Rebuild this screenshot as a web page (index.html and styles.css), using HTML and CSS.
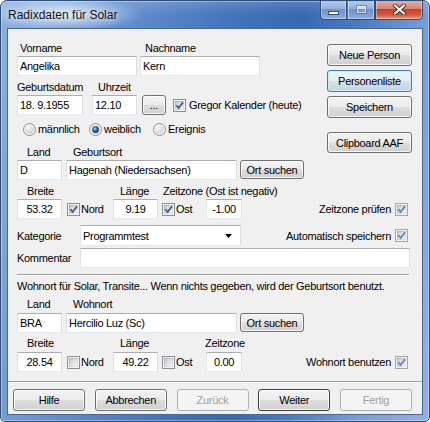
FILE: index.html
```html
<!DOCTYPE html>
<html lang="de">
<head>
<meta charset="utf-8">
<title>Radixdaten für Solar</title>
<link rel="stylesheet" href="styles.css">
</head>
<body>
<svg class="defs" width="0" height="0" aria-hidden="true">
  <defs>
    <linearGradient id="cbFill" x1="0" y1="0" x2="1" y2="1">
      <stop offset="0" stop-color="#c6cbd2"/>
      <stop offset="1" stop-color="#f6f6f6"/>
    </linearGradient>
    <linearGradient id="cbEdge" x1="0" y1="0" x2="1" y2="1">
      <stop offset="0" stop-color="#a9aeb5"/>
      <stop offset="1" stop-color="#e4e4e4"/>
    </linearGradient>
    <radialGradient id="rdFill" cx="0.35" cy="0.3" r="0.85">
      <stop offset="0" stop-color="#fafafa"/>
      <stop offset="1" stop-color="#c3c7cd"/>
    </radialGradient>
    <radialGradient id="rdDot" cx="0.42" cy="0.38" r="0.62">
      <stop offset="0" stop-color="#b9ecff"/>
      <stop offset="0.35" stop-color="#3c8fcf"/>
      <stop offset="1" stop-color="#0b2c52"/>
    </radialGradient>
  </defs>
  <symbol id="cb-on" viewBox="0 0 13 13">
    <rect x="0.5" y="0.5" width="12" height="12" fill="#f4f4f4" stroke="#8e8f8f"/>
    <rect x="2.5" y="2.5" width="8" height="8" fill="url(#cbFill)" stroke="url(#cbEdge)"/>
    <path d="M3.4 6.3 5.6 9.1 10 3.3" fill="none" stroke="#4b5f8e" stroke-width="1.8" stroke-linejoin="round"/>
  </symbol>
  <symbol id="cb-on-light" viewBox="0 0 13 13">
    <rect x="0.5" y="0.5" width="12" height="12" fill="#f4f4f4" stroke="#a3a4a6"/>
    <rect x="2.5" y="2.5" width="8" height="8" fill="url(#cbFill)" stroke="url(#cbEdge)"/>
    <path d="M3.4 6.3 5.6 9.1 10 3.3" fill="none" stroke="#6e86bd" stroke-width="1.8" stroke-linejoin="round"/>
  </symbol>
  <symbol id="cb-off" viewBox="0 0 13 13">
    <rect x="0.5" y="0.5" width="12" height="12" fill="#f4f4f4" stroke="#8e8f8f"/>
    <rect x="2.5" y="2.5" width="8" height="8" fill="url(#cbFill)" stroke="url(#cbEdge)"/>
  </symbol>
  <symbol id="rd-off" viewBox="0 0 13 13">
    <circle cx="6.5" cy="6.5" r="6" fill="#f4f4f4" stroke="#8e8f8f"/>
    <circle cx="6.5" cy="6.5" r="4.2" fill="url(#rdFill)"/>
  </symbol>
  <symbol id="rd-on" viewBox="0 0 13 13">
    <circle cx="6.5" cy="6.5" r="6" fill="#f4f4f4" stroke="#8e8f8f"/>
    <circle cx="6.5" cy="6.5" r="4.2" fill="url(#rdFill)"/>
    <circle cx="6.5" cy="6.5" r="3.4" fill="url(#rdDot)"/>
  </symbol>
</svg>

<div class="window">
  <div class="titlebar">
    <span class="title">Radixdaten für Solar</span>
    <div class="caption">
      <div class="cbtn cmin"><span class="g-min"></span></div>
      <div class="cbtn cmax"><span class="g-max"></span></div>
      <div class="cbtn cclose">
        <svg width="13" height="11" viewBox="0 0 13 11">
          <path d="M2 1.5 11 9.5 M11 1.5 2 9.5" stroke="#4a2a26" stroke-width="4" stroke-linecap="round"/>
          <path d="M2 1.5 11 9.5 M11 1.5 2 9.5" stroke="#ffffff" stroke-width="2.2" stroke-linecap="round"/>
        </svg>
      </div>
    </div>
  </div>

  <div class="client">
    <div class="top">
      <div class="left">
        <div class="lbls pl3">
          <span class="w125">Vorname</span><span>Nachname</span>
        </div>
        <div class="ctrls">
          <input class="tb w120" value="Angelika"><input class="tb w120 ml3" value="Kern">
        </div>

        <div class="lbls mt5">
          <span class="w81">Geburtsdatum</span><span>Uhrzeit</span>
        </div>
        <div class="ctrls">
          <input class="tb w66" value="18. 9.1955">
          <input class="tb w45 ml9" value="12.10">
          <div class="btn dots ml5">...</div>
          <div class="chk ml7 gap3">
            <svg class="cb"><use href="#cb-on"/></svg><span>Gregor Kalender (heute)</span>
          </div>
        </div>

        <div class="radios">
          <div class="radio"><svg class="cb"><use href="#rd-off"/></svg><span>männlich</span></div>
          <div class="radio"><svg class="cb"><use href="#rd-on"/></svg><span>weiblich</span></div>
          <div class="radio"><svg class="cb"><use href="#rd-off"/></svg><span>Ereignis</span></div>
        </div>

        <div class="lbls pl10 mt10">
          <span class="w46">Land</span><span>Geburtsort</span>
        </div>
        <div class="ctrls">
          <input class="tb w45" value="D">
          <input class="tb w171 ml4" value="Hagenah (Niedersachsen)">
          <div class="btn ort ml3">Ort suchen</div>
        </div>
      </div>

      <div class="side">
        <div class="btn sbtn">Neue Person</div>
        <div class="btn sbtn focus">Personenliste</div>
        <div class="btn sbtn">Speichern</div>
        <div class="btn sbtn clip">Clipboard AAF</div>
      </div>
    </div>

    <div class="row">
      <div class="lbls pl10 mt5">
        <span class="w93">Breite</span><span class="w43">Länge</span><span>Zeitzone (Ost ist negativ)</span>
      </div>
      <div class="ctrls">
        <input class="tb w45 num" value="53.32">
        <div class="chk ml5 w46"><svg class="cb"><use href="#cb-on"/></svg><span>Nord</span></div>
        <input class="tb w45 num" value="9.19">
        <div class="chk ml4 w44"><svg class="cb"><use href="#cb-on"/></svg><span>Ost</span></div>
        <input class="tb w36 num" value="-1.00">
        <div class="spacer"></div>
        <div class="chk gap4"><span>Zeitzone prüfen</span><svg class="cb"><use href="#cb-on-light"/></svg></div>
      </div>
    </div>

    <div class="row">
      <div class="line mt6 h21">
        <span class="w63">Kategorie</span>
        <div class="combo">
          <span>Programmtest</span>
          <svg class="arrow" width="7" height="4" viewBox="0 0 7 4"><path d="M0 0h7L3.5 4z" fill="#000"/></svg>
        </div>
        <div class="spacer"></div>
        <div class="chk gap4"><span>Automatisch speichern</span><svg class="cb"><use href="#cb-on-light"/></svg></div>
      </div>
      <div class="line mt2">
        <span class="w63">Kommentar</span>
        <input class="tb w330" value="">
      </div>
    </div>

    <div class="sep"></div>

    <div class="row">
      <div class="note">Wohnort für Solar, Transite... Wenn nichts gegeben, wird der Geburtsort benutzt.</div>
      <div class="lbls pl10 mt5 mb2">
        <span class="w46">Land</span><span>Wohnort</span>
      </div>
      <div class="ctrls">
        <input class="tb w45" value="BRA">
        <input class="tb w171 ml4" value="Hercilio Luz (Sc)">
        <div class="btn ort ml3">Ort suchen</div>
      </div>

      <div class="lbls pl10 mt4 mb2">
        <span class="w93">Breite</span><span class="w85">Länge</span><span>Zeitzone</span>
      </div>
      <div class="ctrls">
        <input class="tb w45 num" value="28.54">
        <div class="chk ml5 w46"><svg class="cb"><use href="#cb-off"/></svg><span>Nord</span></div>
        <input class="tb w45 num" value="49.22">
        <div class="chk ml4 w44"><svg class="cb"><use href="#cb-off"/></svg><span>Ost</span></div>
        <input class="tb w36 num" value="0.00">
        <div class="spacer"></div>
        <div class="chk gap4"><span>Wohnort benutzen</span><svg class="cb"><use href="#cb-on-light"/></svg></div>
      </div>
    </div>

    <div class="fsep"></div>

    <div class="footer">
      <div class="btn fbtn">Hilfe</div>
      <div class="btn fbtn">Abbrechen</div>
      <div class="btn fbtn disabled">Zurück</div>
      <div class="btn fbtn default">Weiter</div>
      <div class="btn fbtn disabled">Fertig</div>
    </div>
  </div>
</div>
</body>
</html>
```

FILE: styles.css
```css
* { box-sizing: border-box; }
html, body { margin: 0; padding: 0; }
body {
  width: 430px;
  height: 422px;
  overflow: hidden;
  background: #ffffff;
  font-family: "Liberation Sans", Arial, sans-serif;
  font-size: 11px;
  letter-spacing: -0.3px;
  color: #000;
}
.defs { position: absolute; width: 0; height: 0; overflow: hidden; }

/* ---------- window frame ---------- */
.window {
  width: 430px;
  height: 422px;
  border: 1px solid #2f4d78;
  border-radius: 7px 7px 5px 5px;
  display: flex;
  flex-direction: column;
  overflow: hidden;
  background:
    radial-gradient(ellipse 80px 17px at 62px 13px, rgba(236,244,253,0.9), rgba(236,244,253,0) 100%),
    linear-gradient(180deg, rgba(255,255,255,0.15) 0px, rgba(255,255,255,0) 14px),
    linear-gradient(100deg, #8cb0e0 0%, #6893d0 22%, #4575bd 45%, #3868b1 60%, #4a7bc1 72%, #789fd6 86%, #90b3e1 100%);
  box-shadow: inset 0 0 0 1px rgba(255,255,255,0.35);
}
.titlebar {
  height: 27px;
  flex: none;
  display: flex;
  justify-content: space-between;
  align-items: flex-start;
  padding: 0 6px 0 7px;
}
.title {
  margin-top: 6px;
  font-size: 12px;
  line-height: 16px;
  letter-spacing: 0;
  color: #111;
  text-shadow: 0 0 5px rgba(255,255,255,0.8);
}
.caption { display: flex; margin-top: -1px; }
.cbtn {
  height: 20px;
  display: flex;
  align-items: center;
  justify-content: center;
  border: 1px solid #2c4a73;
  border-top: none;
  box-shadow: inset 0 0 0 1px rgba(255,255,255,0.4);
}
.cmin {
  width: 27px;
  border-radius: 0 0 0 5px;
  background: linear-gradient(180deg, #b7cbe9 0%, #95b2dd 45%, #6f93cb 50%, #8aaee0 100%);
}
.cmax {
  width: 28px;
  border-left: 1px solid #5a77a3;
  background: linear-gradient(180deg, #b7cbe9 0%, #95b2dd 45%, #6f93cb 50%, #8aaee0 100%);
}
.cclose {
  width: 48px;
  border-left: 1px solid #6a3a3a;
  border-radius: 0 0 5px 0;
  background: linear-gradient(180deg, #ebb0a3 0%, #d98472 45%, #c5432b 50%, #cf5a40 78%, #e39a82 100%);
}
.g-min {
  width: 11px;
  height: 4px;
  margin-top: 6px;
  background: #fff;
  border: 1px solid #3b4f70;
}
.g-max {
  width: 11px;
  height: 9px;
  border: 1px solid rgba(60,80,115,0.45);
  box-shadow: inset 0 0 0 1px rgba(255,255,255,0.55), inset 0 2px 0 1px rgba(255,255,255,0.55);
}

/* ---------- client area ---------- */
.client {
  margin: 0 6px;
  height: 387px;
  flex: none;
  border: 1px solid #4d6690;
  background: #f0f0f0;
  display: flex;
  flex-direction: column;
}
.top {
  display: flex;
  justify-content: space-between;
  padding: 13px 10px 0 9px;
}
.left { display: flex; flex-direction: column; }
.side { display: flex; flex-direction: column; margin-top: 2px; gap: 4px; }
.row { display: flex; flex-direction: column; padding: 0 14px 0 9px; }

.lbls {
  display: flex;
  height: 13px;
  line-height: 13px;
  margin-bottom: 1px;
  white-space: nowrap;
}
.lbls span { flex: none; }
.ctrls {
  display: flex;
  align-items: center;
  height: 20px;
  white-space: nowrap;
}
.line {
  display: flex;
  align-items: center;
  height: 20px;
  white-space: nowrap;
}
.line > span { flex: none; }
.h21 { height: 21px; }
.spacer { flex: 1; }

.note {
  margin-top: 4px;
  height: 13px;
  line-height: 13px;
  white-space: nowrap;
}

/* spacing helpers */
.pl3 { padding-left: 3px; }
.pl10 { padding-left: 10px; }
.mt2 { margin-top: 2px; }
.mt4 { margin-top: 4px; }
.mt5 { margin-top: 5px; }
.mt6 { margin-top: 6px; }
.mt10 { margin-top: 10px; }
.mb2 { margin-bottom: 2px; }
.ml3 { margin-left: 3px; }
.ml4 { margin-left: 4px; }
.ml5 { margin-left: 5px; }
.ml7 { margin-left: 7px; }
.ml9 { margin-left: 9px; }
.w36 { width: 36px; }
.w43 { width: 43px; }
.w44 { width: 44px; }
.w45 { width: 45px; }
.w46 { width: 46px; }
.w63 { width: 63px; }
.w66 { width: 66px; }
.w81 { width: 81px; }
.w85 { width: 85px; }
.w93 { width: 93px; }
.w120 { width: 120px; }
.w125 { width: 125px; }
.w171 { width: 171px; }
.w330 { width: 330px; }

/* ---------- text box ---------- */
.tb {
  flex: none;
  height: 20px;
  margin-top: 0;
  margin-bottom: 0;
  padding: 0 2px;
  border: 1px solid;
  border-color: #abadb3 #dbdfe6 #e3e9ef #e2e3ea;
  border-radius: 0;
  background: #fff;
  font: inherit;
  letter-spacing: inherit;
  color: #000;
  outline: none;
}
.tb.num { text-align: center; }

/* ---------- combo ---------- */
.combo {
  flex: none;
  width: 161px;
  height: 21px;
  border: 1px solid;
  border-color: #abadb3 #dbdfe6 #e3e9ef #e2e3ea;
  background: #fff;
  display: flex;
  align-items: center;
  justify-content: space-between;
  padding: 0 8px 0 2px;
}
.arrow { display: block; }

/* ---------- check / radio ---------- */
.cb { width: 13px; height: 13px; flex: none; display: block; }
.chk {
  flex: none;
  display: flex;
  align-items: center;
  gap: 1px;
  white-space: nowrap;
}
.gap3 { gap: 3px; }
.gap4 { gap: 4px; }
.radios {
  display: flex;
  align-items: center;
  height: 13px;
  margin-top: 8px;
  padding-left: 6px;
}
.radio {
  display: flex;
  align-items: center;
  gap: 2px;
  line-height: 13px;
}
.radio:nth-child(1) { width: 66px; }
.radio:nth-child(2) { width: 64px; }

/* ---------- buttons ---------- */
.btn {
  flex: none;
  display: flex;
  align-items: center;
  justify-content: center;
  border: 1px solid #707070;
  border-radius: 3px;
  background: linear-gradient(180deg, #f3f3f3 0%, #ebebeb 48%, #dddddd 52%, #cfcfcf 100%);
  box-shadow: inset 0 0 0 1px rgba(255,255,255,0.8);
  white-space: nowrap;
  color: #000;
}
.btn.dots { width: 24px; height: 20px; align-items: flex-end; padding-bottom: 3px; line-height: 11px; }
.btn.ort { width: 64px; height: 19px; margin-top: -1px; }
.sbtn { width: 85px; height: 22px; }
.sbtn.clip { margin-top: 10px; height: 21px; }
.btn.focus {
  border-color: #3c7fb1;
  background: linear-gradient(180deg, #edf5fa 0%, #e2edf4 48%, #d2e1ea 52%, #c4d6e2 100%);
  box-shadow: inset 0 0 0 1px #cfeafa;
}

.sep {
  flex: none;
  margin: 6px 0 0 9px;
  width: 392px;
  height: 2px;
  border-top: 1px solid #a0a0a0;
  border-bottom: 1px solid #ffffff;
}
.fsep {
  flex: none;
  margin-top: 9px;
  height: 2px;
  border-top: 1px solid #a0a0a0;
  border-bottom: 1px solid #ffffff;
}
.footer {
  display: flex;
  justify-content: space-between;
  margin-top: 6px;
  padding: 0 10px 0 5px;
}
.fbtn { width: 72px; height: 22px; }
.btn.disabled {
  border-color: #adb2b5;
  background: #f4f4f4;
  box-shadow: none;
  color: #a0a0a0;
}
.btn.default { border-color: #3d3d3d; }
```
